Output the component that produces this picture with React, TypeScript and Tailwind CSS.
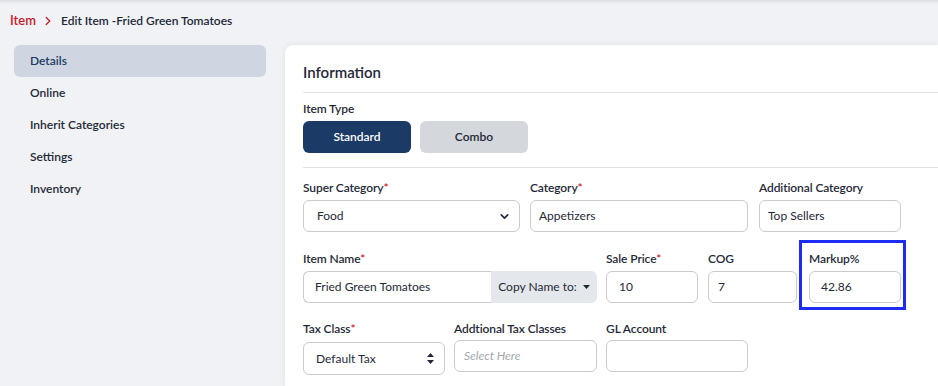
import React from 'react';
import { ChevronRight, ChevronDown } from 'lucide-react';

const sideItems = ['Details', 'Online', 'Inherit Categories', 'Settings', 'Inventory'];

function Label({ text, required }: { text: string; required?: boolean }) {
  return (
    <div className="text-[12px] leading-4 font-semibold text-[#1f2937] tracking-[-0.1px]">
      {text}
      {required && <span className="text-[#d0202e]">*</span>}
    </div>
  );
}

function TextBox({ value, placeholder, className = '' }: { value?: string; placeholder?: string; className?: string }) {
  return (
    <div className={`h-8 border border-[#c8cbd0] rounded-md bg-white flex items-center text-[12px] ${className}`}>
      {value ? (
        <span className="text-[#1f2937]">{value}</span>
      ) : (
        <span className="italic text-[#a3a7ad]">{placeholder}</span>
      )}
    </div>
  );
}

export default function App() {
  return (
    <div
      className="h-[386px] w-[938px] overflow-hidden bg-[#f0f2f6] flex flex-col"
      style={{ fontFamily: 'Lato, "Noto Sans", sans-serif' }}
    >
      <div className="h-[4px] bg-gradient-to-b from-[#dcdee2] to-[#f0f2f6]" />

      {/* breadcrumb */}
      <div className="h-[37px] flex items-center pl-[10px] -mt-[2px]">
        <span className="text-[13px] font-semibold text-[#c8182b]">Item</span>
        <ChevronRight className="w-[14px] h-[14px] text-[#c8182b] ml-[5px] mr-[6px]" strokeWidth={2.2} />
        <span className="text-[12px] font-semibold text-[#1f2937]">Edit Item -Fried Green Tomatoes</span>
      </div>

      <div className="flex flex-1 min-h-0 mt-[6px]">
        {/* sidebar */}
        <div className="w-[252px] ml-[14px] mr-[19px] flex flex-col">
          {sideItems.map((s, i) => (
            <div
              key={s}
              className={`h-8 flex items-center pl-4 rounded-md text-[12px] font-semibold ${
                i === 0 ? 'bg-[#d0d6e1] text-[#1c3a63]' : 'text-[#1f2937]'
              }`}
            >
              {s}
            </div>
          ))}
        </div>

        {/* card */}
        <div className="flex-1 bg-white rounded-tl-lg shadow-[0_0_6px_rgba(0,0,0,0.08)] pl-[18px] pt-[17px]">
          <div className="text-[15px] leading-5 font-semibold text-[#1f2937]">Information</div>
          <div className="h-px bg-[#dfe1e5] mt-[10px]" />

          <div className="mt-[8px]">
            <Label text="Item Type" />
            <div className="flex gap-[9px] mt-[4px]">
              <div className="w-[108px] h-8 rounded-md bg-[#1b3a65] text-white text-[12px] font-semibold flex items-center justify-center">
                Standard
              </div>
              <div className="w-[108px] h-8 rounded-md bg-[#d4d7db] text-[#1f2937] text-[12px] font-semibold flex items-center justify-center">
                Combo
              </div>
            </div>
          </div>
          <div className="h-px bg-[#dfe1e5] mt-[14px]" />

          {/* row 1 */}
          <div className="flex mt-[12px]">
            <div className="w-[217px] flex flex-col gap-[4px]">
              <Label text="Super Category" required />
              <div className="h-8 border border-[#c8cbd0] rounded-md flex items-center justify-between pl-[13px] pr-[8px] text-[12px] text-[#1f2937]">
                Food
                <ChevronDown className="w-[13px] h-[13px] text-[#1f2937]" strokeWidth={3} />
              </div>
            </div>
            <div className="w-[218px] ml-[10px] flex flex-col gap-[4px]">
              <Label text="Category" required />
              <TextBox value="Appetizers" className="pl-[8px]" />
            </div>
            <div className="w-[142px] ml-[11px] flex flex-col gap-[4px]">
              <Label text="Additional Category" />
              <TextBox value="Top Sellers" className="pl-[8px]" />
            </div>
          </div>

          {/* row 2 */}
          <div className="flex mt-[19px]">
            <div className="w-[294px] flex flex-col gap-[4px]">
              <Label text="Item Name" required />
              <div className="h-8 flex">
                <div className="flex-1 border border-[#c8cbd0] border-r-0 rounded-l-md flex items-center pl-[11px] text-[12px] text-[#1f2937]">
                  Fried Green Tomatoes
                </div>
                <div className="w-[106px] bg-[#e4e7eb] rounded-r-md flex items-center justify-center gap-[6px] text-[12px] text-[#1f2937]">
                  Copy Name to:
                  <svg width="7" height="4" viewBox="0 0 7 4"><path d="M0 0h7L3.5 4z" fill="#1f2937" /></svg>
                </div>
              </div>
            </div>
            <div className="w-[92px] ml-[9px] flex flex-col gap-[4px]">
              <Label text="Sale Price" required />
              <TextBox value="10" className="pl-[12px]" />
            </div>
            <div className="w-[89px] ml-[10px] flex flex-col gap-[4px]">
              <Label text="COG" />
              <TextBox value="7" className="pl-[9px]" />
            </div>
            <div className="relative w-[92px] ml-[12px] flex flex-col gap-[4px]">
              <span className="absolute -left-[10px] -right-[5px] -top-[11px] -bottom-[7px] border-[3px] border-[#1c2cf0]" />
              <Label text="Markup%" />
              <TextBox value="42.86" className="pl-[11px]" />
            </div>
          </div>

          {/* row 3 */}
          <div className="flex mt-[18px]">
            <div className="w-[142px] flex flex-col gap-[5px]">
              <Label text="Tax Class" required />
              <div className="h-[33px] border border-[#c8cbd0] rounded-md flex items-center justify-between pl-[12px] pr-[10px] text-[12px] text-[#1f2937]">
                Default Tax
                <svg width="7" height="11" viewBox="0 0 7 11">
                  <path d="M3.5 0L7 4H0z M0 7h7L3.5 11z" fill="#1f2937" />
                </svg>
              </div>
            </div>
            <div className="w-[143px] ml-[9px] flex flex-col gap-[3px]">
              <Label text="Addtional Tax Classes" />
              <TextBox placeholder="Select Here" className="pl-[9px]" />
            </div>
            <div className="w-[142px] ml-[9px] flex flex-col gap-[3px]">
              <Label text="GL Account" />
              <TextBox className="pl-[9px]" />
            </div>
          </div>
        </div>
      </div>
    </div>
  );
}
